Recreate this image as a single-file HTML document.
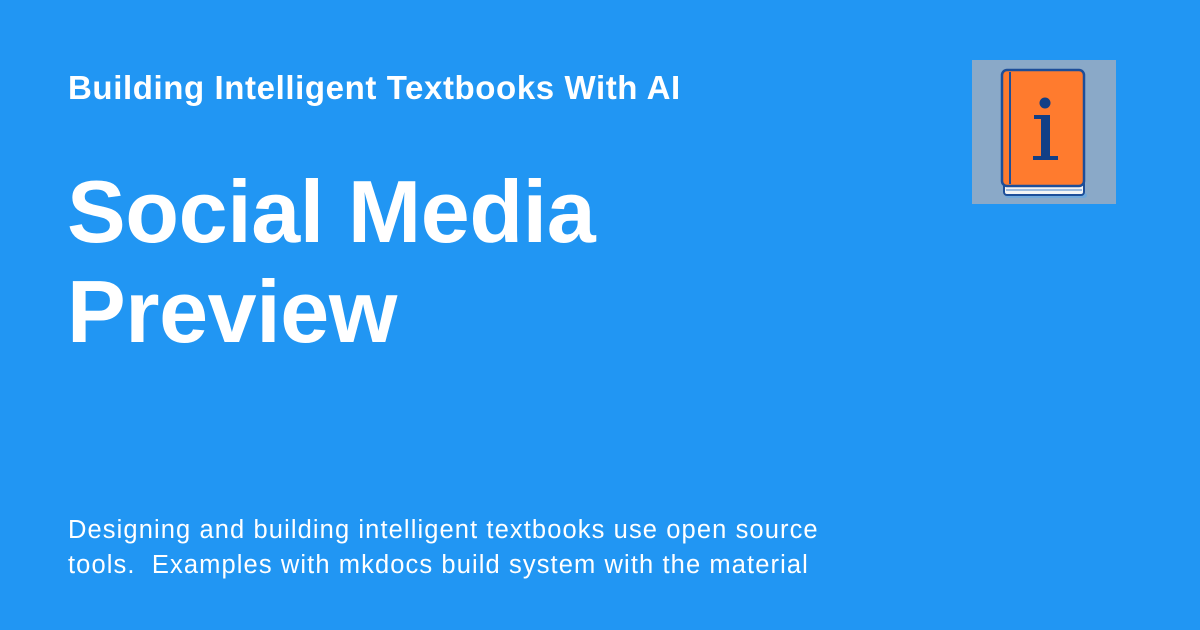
<!DOCTYPE html>
<html><head><style>
body{margin:0;width:1200px;height:630px;background:#2196f3;position:relative;overflow:hidden;font-family:"Liberation Sans",sans-serif;color:#fff}
.t1{position:absolute;left:68px;top:69px;font-size:33px;font-weight:bold;letter-spacing:0.6px}
.t2{position:absolute;left:67px;top:162px;font-size:88px;font-weight:bold;line-height:100px;letter-spacing:-0.4px}
.d{position:absolute;left:68px;top:513px;font-size:25.5px;line-height:35px;letter-spacing:1.1px;white-space:pre}
.logo{position:absolute;left:972px;top:60px;width:144px;height:144px;background:#8aa9c8}
</style></head><body>
<div class="t1">Building Intelligent Textbooks With AI</div>
<div class="t2">Social Media<br>Preview</div>
<div class="d">Designing and building intelligent textbooks use open source
tools.  Examples with mkdocs build system with the material</div>
<div class="logo">
<svg width="144" height="144" viewBox="0 0 144 144">
<rect x="33" y="133" width="82" height="5" rx="3" fill="#5fa8e8" opacity="0.6"/>
<rect x="32" y="121" width="80" height="14" rx="3" fill="#f4f4f4" stroke="#1d4e99" stroke-width="2"/>
<line x1="34" y1="130" x2="110" y2="130" stroke="#7fa8d8" stroke-width="1.5"/>
<rect x="30" y="10" width="82" height="116" rx="5" fill="#ff7b2e" stroke="#1d4e99" stroke-width="2.5"/>
<line x1="38" y1="12" x2="38" y2="124" stroke="#1d4e99" stroke-width="2"/>
<circle cx="73" cy="43" r="5.5" fill="#123f86"/>
<path d="M62 55h16v41h8v4H61v-4h8V59h-7z" fill="#123f86"/>
</svg>
</div>
</body></html>
